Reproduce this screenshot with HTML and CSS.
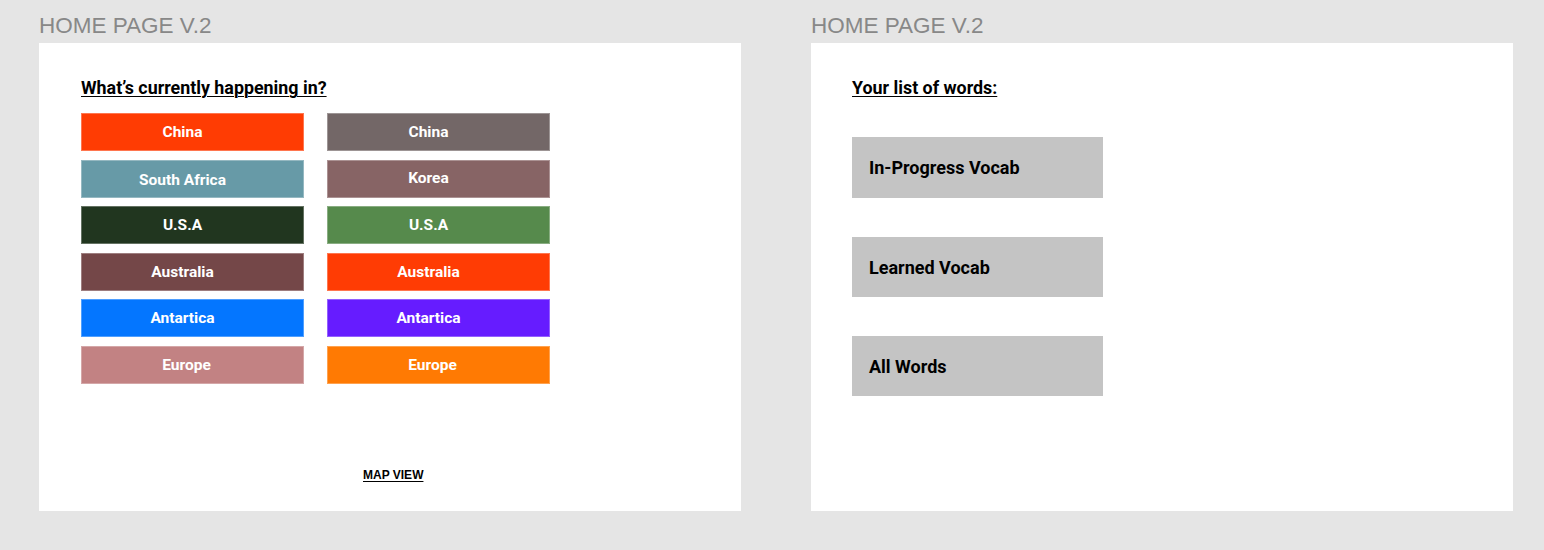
FILE: index.html
```html
<!DOCTYPE html>
<html lang="en">
<head>
<meta charset="utf-8">
<title>Home Page V.2</title>
<link rel="stylesheet" href="styles.css">
</head>
<body>
<div class="canvas">
  <section class="board">
    <div class="board-title">HOME PAGE V.2</div>
    <div class="frame frame-left">
      <h2 class="heading">What’s currently happening in?</h2>
      <div class="region-grid">
        <a class="region c-china1">China</a>
        <a class="region c-china2">China</a>
        <a class="region c-safrica">South Africa</a>
        <a class="region c-korea">Korea</a>
        <a class="region c-usa1">U.S.A</a>
        <a class="region c-usa2">U.S.A</a>
        <a class="region c-aus1">Australia</a>
        <a class="region c-aus2">Australia</a>
        <a class="region c-ant1">Antartica</a>
        <a class="region c-ant2">Antartica</a>
        <a class="region c-eu1 wide">Europe</a>
        <a class="region c-eu2 wide">Europe</a>
      </div>
      <div class="map-row"><a class="map-link">MAP VIEW</a></div>
    </div>
  </section>
  <section class="board">
    <div class="board-title">HOME PAGE V.2</div>
    <div class="frame frame-right">
      <h2 class="heading">Your list of words:</h2>
      <div class="word-lists">
        <div class="word-card first">In-Progress Vocab</div>
        <div class="word-card">Learned Vocab</div>
        <div class="word-card">All Words</div>
      </div>
    </div>
  </section>
</div>
</body>
</html>
```

FILE: styles.css
```css
html, body {
  margin: 0;
  padding: 0;
  background: #e5e5e5;
}

.canvas {
  display: flex;
  gap: 70px;
  padding: 15px 0 0 39px;
}

.board {
  width: 702px;
  display: flex;
  flex-direction: column;
}

.board-title {
  font-family: "Liberation Sans", Arial, sans-serif;
  font-size: 22.5px;
  line-height: 22px;
  color: #888888;
  margin: 0 0 6px 0;
}

.frame {
  background: #ffffff;
  height: 468px;
  box-sizing: border-box;
  display: flex;
  flex-direction: column;
  padding-top: 34px;
}

.frame-left {
  padding-left: 42px;
  padding-bottom: 28px;
}

.frame-right {
  padding-left: 41px;
}

.heading {
  margin: 0;
  font-family: Roboto, "Liberation Sans", sans-serif;
  font-weight: 700;
  font-size: 17.85px;
  line-height: 21px;
  color: #000;
  text-decoration: underline;
  text-underline-offset: 2px;
  text-decoration-thickness: 1px;
}

.region-grid {
  margin-top: 15px;
  display: grid;
  grid-template-columns: 223px 223px;
  grid-auto-rows: 38px;
  column-gap: 23px;
  row-gap: 8.5px;
}

.region {
  display: flex;
  align-items: center;
  justify-content: center;
  box-sizing: border-box;
  padding-right: 20px;
  font-family: Roboto, "Liberation Sans", sans-serif;
  font-weight: 700;
  font-size: 15.5px;
  color: #ffffff;
  box-shadow: inset 0 0 0 1px rgba(255, 255, 255, 0.3);
}

.region.wide {
  padding-right: 12px;
}

.c-china1 { background: #ff3c03; }
.c-china2 { background: #736767; }
.c-safrica { background: #679aa7; padding-top: 3px; }
.c-korea { background: #876465; padding-bottom: 2px; }
.c-usa1 { background: #21361f; }
.c-usa2 { background: #568a4c; }
.c-aus1 { background: #744748; }
.c-aus2 { background: #ff3c04; }
.c-ant1 { background: #0476ff; }
.c-ant2 { background: #661cff; }
.c-eu1 { background: #c28283; }
.c-eu2 { background: #ff7a03; }

.map-row {
  margin-top: auto;
  padding-left: 282px;
}

.map-link {
  font-family: "Liberation Sans", Arial, sans-serif;
  font-weight: 700;
  font-size: 12px;
  line-height: 14px;
  color: #000;
  text-decoration: underline;
  text-underline-offset: 2px;
}

.word-lists {
  margin-top: 39px;
  display: flex;
  flex-direction: column;
  gap: 39px;
}

.word-card {
  width: 251px;
  height: 60px;
  box-sizing: border-box;
  background: #c4c4c4;
  display: flex;
  align-items: center;
  padding-left: 17px;
  font-family: Roboto, "Liberation Sans", sans-serif;
  font-weight: 700;
  font-size: 18px;
  color: #000;
}

.word-card.first {
  height: 61px;
}
```
